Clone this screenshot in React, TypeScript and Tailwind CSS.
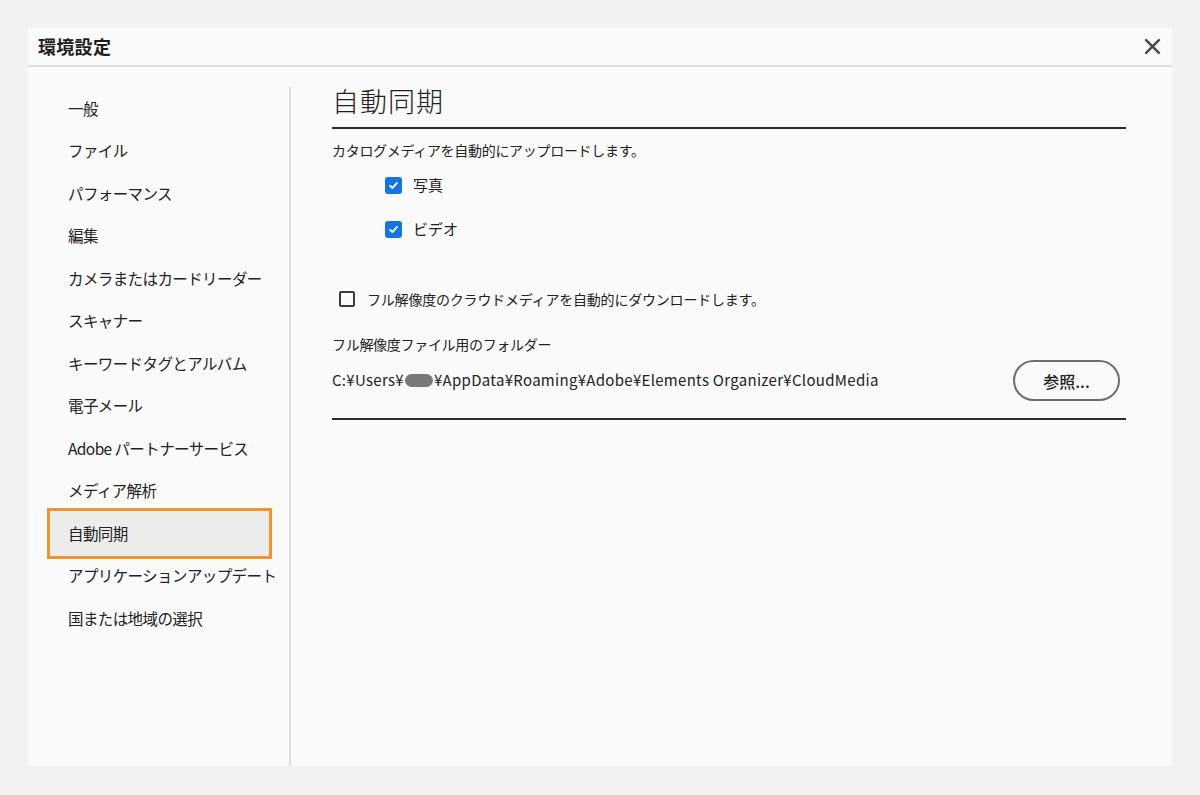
const font = { fontFamily: '"Noto Sans CJK JP", "Noto Sans", sans-serif' };

const menuItems = [
  "一般",
  "ファイル",
  "パフォーマンス",
  "編集",
  "カメラまたはカードリーダー",
  "スキャナー",
  "キーワードタグとアルバム",
  "電子メール",
  "Adobe パートナーサービス",
  "メディア解析",
  "自動同期",
  "アプリケーションアップデート",
  "国または地域の選択",
];

function CheckedBox() {
  return (
    <span className="flex h-[17px] w-[17px] items-center justify-center rounded-[3px] bg-[#1473e6]">
      <svg viewBox="0 0 12 12" className="h-[11px] w-[11px]" fill="none">
        <path d="M2.2 6.3 4.8 8.8 9.8 3.2" stroke="white" strokeWidth="2" strokeLinecap="round" strokeLinejoin="round" />
      </svg>
    </span>
  );
}

export default function App() {
  return (
    <div className="min-h-[795px] w-full bg-[#f2f2f2] p-[28px]" style={font}>
      <div className="flex h-[738px] w-[1144px] flex-col bg-[#fafafa] text-[#222]">
        {/* ヘッダー */}
        <div className="flex h-[39px] shrink-0 items-center justify-between border-b-2 border-[#dcdcdc] pl-[10px] pr-[11px]">
          <h1 className="text-[18px] font-bold tracking-[0.3px] text-[#1e1e1e]">環境設定</h1>
          <svg viewBox="0 0 16 16" className="h-[17px] w-[17px]" fill="none">
            <path d="M2 2 14 14M14 2 2 14" stroke="#4a4a4a" strokeWidth="2.4" strokeLinecap="round" />
          </svg>
        </div>

        <div className="flex flex-1 pt-[20px]">
          {/* サイドバー */}
          <div className="w-[263px] shrink-0 border-r-2 border-[#dedede]">
            <ul className="pl-[19px]">
              {menuItems.map((item) => {
                const active = item === "自動同期";
                return (
                  <li key={item} className="relative flex h-[42.5px] w-[225px] items-center whitespace-nowrap pl-[21px] text-[15.5px] tracking-[-0.6px]">
                    {active && (
                      <span className="absolute inset-x-0 -top-[4px] -bottom-[4px] border-[3px] border-[#f0942e] bg-[#ececec]" />
                    )}
                    <span className="relative">{item}</span>
                  </li>
                );
              })}
            </ul>
          </div>

          {/* 本文 */}
          <div className="flex-1 pl-[41px] pr-[46px]">
            <h2 className="border-b-2 border-[#2c2c2c] pb-[12px] text-[27px] font-light leading-[28px] tracking-[1px]">自動同期</h2>

            <p className="mt-[11px] text-[14px] leading-[20px] tracking-[-0.3px]">カタログメディアを自動的にアップロードします。</p>

            <div className="mt-[13px] ml-[53px] flex flex-col gap-[20px]">
              <label className="flex h-[24px] items-center gap-[11px] text-[15px]">
                <CheckedBox />
                写真
              </label>
              <label className="flex h-[24px] items-center gap-[11px] text-[15px]">
                <CheckedBox />
                ビデオ
              </label>
            </div>

            <label className="mt-[46px] ml-[7px] flex h-[24px] items-center gap-[12px] text-[14px] tracking-[-0.2px]">
              <span className="h-[16px] w-[16px] rounded-[2px] border-2 border-[#3c3c3c]" />
              フル解像度のクラウドメディアを自動的にダウンロードします。
            </label>

            <p className="mt-[23px] text-[14px] leading-[20px] tracking-[-0.3px]">フル解像度ファイル用のフォルダー</p>

            <div className="mt-[6px] flex h-[41px] items-center justify-between pr-[6px]">
              <span className="flex items-center text-[15px] tracking-[0.3px] text-[#222]">
                C:¥Users¥
                <span className="mx-[1px] inline-block h-[13px] w-[28px] rounded-full bg-[#787878]" />
                ¥AppData¥Roaming¥Adobe¥Elements Organizer¥CloudMedia
              </span>
              <button className="h-[41px] w-[107px] rounded-full border-2 border-[#6e6e6e] text-[16px] font-medium text-[#222]">
                参照...
              </button>
            </div>

            <div className="mt-[17px] border-t-2 border-[#2c2c2c]" />
          </div>
        </div>
      </div>
    </div>
  );
}
